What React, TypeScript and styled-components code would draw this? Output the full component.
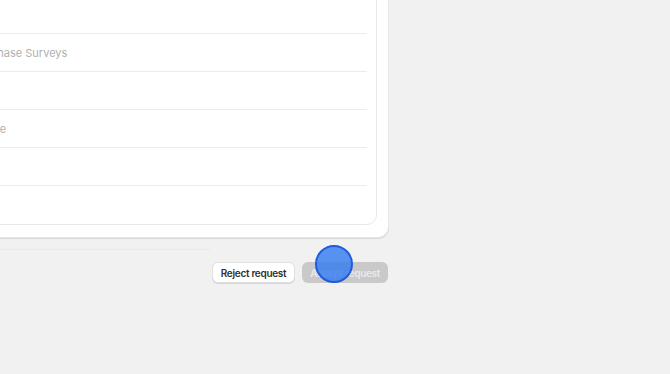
import React from "react";
import styled, { createGlobalStyle } from "styled-components";

const Global = createGlobalStyle`
  html, body { margin: 0; padding: 0; background: #f1f1f1; overflow: hidden; }
  body { font-family: Inter, "Noto Sans", "Liberation Sans", sans-serif; }
`;

const Page = styled.div`
  position: relative;
  width: 670px;
  height: 374px;
  overflow: hidden;
`;

const Column = styled.div`
  width: 468px;
  margin-left: -80px;
  margin-top: -55px;
  display: flex;
  flex-direction: column;
`;

const OuterCard = styled.div`
  background: #ffffff;
  border-radius: 0 0 10px 10px;
  padding: 12px 11px 12px 12px;
  box-shadow: 0 0 0 1px #e6e6e6, 0 1px 0 1px #d9d9d9;
`;

const InnerCard = styled.div`
  background: #ffffff;
  border: 1px solid #e8e8e8;
  border-radius: 10px;
  padding: 0 9px 0 12px;
`;

const Row = styled.div<{ $last?: boolean }>`
  box-sizing: border-box;
  height: 38px;
  display: flex;
  align-items: center;
  border-bottom: ${(p) => (p.$last ? "none" : "1px solid #ebebeb")};
  font-size: 11px;
  color: #b0b0b0;
  padding-left: 1px;
  white-space: nowrap;
`;

const Divider = styled.div`
  height: 1px;
  background: #e8e8e8;
  margin: 12px 178px 0 0;
`;

const Footer = styled.div`
  display: flex;
  justify-content: flex-end;
  gap: 7px;
  margin-top: 12px;
`;

const Button = styled.button<{ $primary?: boolean }>`
  box-sizing: border-box;
  height: 21px;
  padding: 0 8px;
  border-radius: 6px;
  font-family: Inter, "Noto Sans", "Liberation Sans", sans-serif;
  font-size: 10px;
  letter-spacing: -0.3px;
  font-weight: 600;
  cursor: pointer;
  border: ${(p) => (p.$primary ? "none" : "1px solid #e0e0e0")};
  background: ${(p) => (p.$primary ? "#c9c9c9" : "#ffffff")};
  color: ${(p) => (p.$primary ? "#e9e9e9" : "#303030")};
  box-shadow: ${(p) => (p.$primary ? "none" : "0 1px 0 #d4d4d4")};
`;

const Cursor = styled.div`
  position: absolute;
  left: 315px;
  top: 245px;
  width: 38px;
  height: 38px;
  box-sizing: border-box;
  border-radius: 50%;
  background: rgba(54, 124, 240, 0.82);
  border: 2px solid #1f5bdc;
  pointer-events: none;
`;

const rows = ["", "", "Post-purchase Surveys", "", "Home page", "", ""];

export default function App() {
  return (
    <Page>
      <Global />
      <Column>
        <OuterCard>
          <InnerCard>
            {rows.map((r, i) => (
              <Row key={i} $last={i === rows.length - 1}>
                {r}
              </Row>
            ))}
          </InnerCard>
        </OuterCard>
        <Divider />
        <Footer>
          <Button>Reject request</Button>
          <Button $primary disabled>
            Accept request
          </Button>
        </Footer>
      </Column>
      <Cursor />
    </Page>
  );
}
